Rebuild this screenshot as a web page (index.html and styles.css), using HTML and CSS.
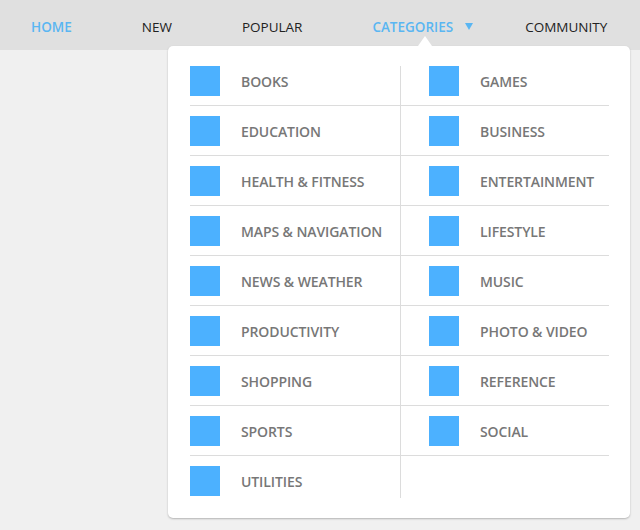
FILE: index.html
```html
<!DOCTYPE html>
<html>
<head>
<meta charset="utf-8">
<link rel="stylesheet" href="styles.css">
</head>
<body>
<nav class="nav">
  <a class="nav-link active">HOME</a>
  <a class="nav-link">NEW</a>
  <a class="nav-link">POPULAR</a>
  <a class="nav-link active cat">CATEGORIES<span class="tri"></span></a>
  <a class="nav-link">COMMUNITY</a>
</nav>
<div class="menu">
  <span class="caret"></span>
  <div class="cols">
    <ul class="col left">
      <li class="item"><span class="sq"></span>BOOKS</li>
      <li class="item"><span class="sq"></span>EDUCATION</li>
      <li class="item"><span class="sq"></span>HEALTH &amp; FITNESS</li>
      <li class="item"><span class="sq"></span>MAPS &amp; NAVIGATION</li>
      <li class="item"><span class="sq"></span>NEWS &amp; WEATHER</li>
      <li class="item"><span class="sq"></span>PRODUCTIVITY</li>
      <li class="item"><span class="sq"></span>SHOPPING</li>
      <li class="item"><span class="sq"></span>SPORTS</li>
      <li class="item last"><span class="sq"></span>UTILITIES</li>
    </ul>
    <ul class="col right">
      <li class="item"><span class="sq"></span>GAMES</li>
      <li class="item"><span class="sq"></span>BUSINESS</li>
      <li class="item"><span class="sq"></span>ENTERTAINMENT</li>
      <li class="item"><span class="sq"></span>LIFESTYLE</li>
      <li class="item"><span class="sq"></span>MUSIC</li>
      <li class="item"><span class="sq"></span>PHOTO &amp; VIDEO</li>
      <li class="item"><span class="sq"></span>REFERENCE</li>
      <li class="item"><span class="sq"></span>SOCIAL</li>
    </ul>
  </div>
</div>
</body>
</html>
```

FILE: styles.css
```css
* { box-sizing: border-box; }
html, body { margin: 0; padding: 0; }
body {
  background: #f0f0f0;
  font-family: "Open Sans", "Noto Sans", sans-serif;
  width: 640px;
  height: 530px;
  position: relative;
  overflow: hidden;
}
.nav {
  height: 50px;
  background: #e0e0e0;
  display: flex;
  align-items: center;
  padding-left: 31px;
  gap: 70px;
}
.nav-link {
  font-size: 13.5px;
  color: #222;
  line-height: 1;
  display: flex;
  align-items: center;
  padding-top: 5px;
}
.nav-link.active { color: #5ab6f2; font-weight: 600; }
.cat { margin-right: -18px; }
.tri {
  display: inline-block;
  width: 0; height: 0;
  border-left: 4px solid transparent;
  border-right: 4px solid transparent;
  border-top: 7px solid #5ab6f2;
  margin-left: 12px;
  margin-top: -3px;
}
.menu {
  position: absolute;
  left: 168px;
  top: 46px;
  width: 462px;
  background: #fff;
  border-radius: 5px;
  box-shadow: 0 1px 2px rgba(0,0,0,0.25);
  padding: 20px 21px 20px 22px;
}
.caret {
  position: absolute;
  top: -10px;
  left: 250px;
  width: 0; height: 0;
  border-left: 7px solid transparent;
  border-right: 7px solid transparent;
  border-bottom: 10px solid #fff;
}
.cols { display: flex; }
.col { list-style: none; margin: 0; padding: 0; }
.col.left { width: 210px; }
.col.right { flex: 1; border-left: 1px solid #dcdcdc; }
.item {
  display: flex;
  align-items: center;
  height: 40px;
  padding-bottom: 9px;
  margin-bottom: 10px;
  border-bottom: 1px solid #dcdcdc;
  font-size: 14px;
  font-weight: 600;
  color: #777;
  letter-spacing: -0.1px;
}
.item.last { border-bottom: none; margin-bottom: 0; height: 32px; padding-bottom: 2px; }
.right .item { padding-left: 28px; }
.sq {
  width: 30px;
  height: 30px;
  background: #4cb1ff;
  margin-right: 21px;
  flex: none;
}
```
